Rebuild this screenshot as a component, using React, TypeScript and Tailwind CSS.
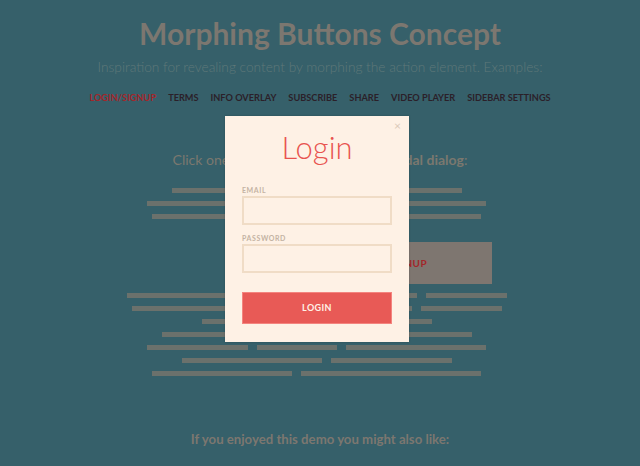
const topRows: [number, number][][] = [
  [[172, 462]],
  [[147, 486]],
  [[152, 481]],
];

const bottomRows: [number, number][][] = [
  [[127, 300], [309, 417], [426, 507]],
  [[132, 260], [269, 412], [421, 502]],
  [[202, 330], [339, 432]],
  [[162, 290], [299, 472]],
  [[147, 248], [257, 337], [346, 486]],
  [[182, 322], [331, 452]],
  [[152, 292], [301, 481]],
];

const navItems = ['Terms', 'Info Overlay', 'Subscribe', 'Share', 'Video Player', 'Sidebar Settings'];

function Bars({ rows }: { rows: [number, number][][] }) {
  return (
    <div className="flex w-full flex-col gap-[8px]">
      {rows.map((row, i) => (
        <div key={i} className="flex h-[5px]">
          {row.map(([from, to], j) => {
            const prev = j === 0 ? 0 : row[j - 1][1];
            return (
              <div
                key={j}
                className="h-[5px] bg-[#6b716c]"
                style={{ marginLeft: from - prev, width: to - from }}
              />
            );
          })}
        </div>
      ))}
    </div>
  );
}

export default function App() {
  return (
    <div className="relative h-[466px] w-[640px] overflow-hidden bg-[#36606a] font-['Lato',sans-serif]">
      <div className="flex flex-col items-center pt-[15px]">
        <h1 className="text-[30px] font-bold leading-[36px] text-[#7c7770]">Morphing Buttons Concept</h1>
        <p className="mt-[6px] text-[13.7px] font-light leading-[20px] text-[#5f7879]">
          Inspiration for revealing content by morphing the action element. Examples:
        </p>
        <nav className="mt-[15px] flex gap-[12px] text-[9.2px] font-bold uppercase leading-[12px] text-[#2b2029]">
          <span className="text-[#a3262a]">Login/Signup</span>
          {navItems.map((item) => (
            <span key={item}>{item}</span>
          ))}
        </nav>
        <p className="mt-[46px] text-[14px] leading-[20px] text-[#7b786f]">
          Click one of the buttons to open a <b className="font-bold">modal dialog</b>:
        </p>
      </div>

      <div className="mt-[18px]">
        <Bars rows={topRows} />
      </div>

      <div className="mt-[23px] flex">
        <button className="ml-[278px] h-[42px] w-[214px] bg-[#7e7670] text-[10px] font-bold uppercase tracking-[0.5px] text-[#a3262a]">
          Login / Signup
        </button>
      </div>

      <div className="mt-[9px]">
        <Bars rows={bottomRows} />
      </div>

      <p className="mt-[53px] text-center text-[13.2px] font-bold leading-[20px] text-[#7c7770]">
        If you enjoyed this demo you might also like:
      </p>

      <div className="absolute left-[225px] top-[116px] flex h-[226px] w-[184px] flex-col bg-[#fef1e5] px-[17px] shadow-[0_0_2px_rgba(0,0,0,0.2)]">
        <span className="absolute right-[8px] top-[3px] text-[12px] leading-[14px] text-[#dbcab9]">×</span>
        <h2 className="mt-[11px] text-center text-[31px] font-light leading-[40px] text-[#e8534f]">Login</h2>
        <label className="mt-[19px] text-[7px] font-bold uppercase leading-[8px] tracking-[0.6px] text-[#c4b3a3]">Email</label>
        <div className="mt-[2px] h-[29px] border-2 border-[#f0dcc6]" />
        <label className="mt-[9px] text-[7px] font-bold uppercase leading-[8px] tracking-[0.6px] text-[#c4b3a3]">Password</label>
        <div className="mt-[2px] h-[29px] border-2 border-[#f0dcc6]" />
        <button className="mt-[19px] h-[32px] border border-[#f4847e] bg-[#e85a56] text-[9px] font-bold uppercase tracking-[0.4px] text-[#fff2e6]">
          Login
        </button>
      </div>
    </div>
  );
}
